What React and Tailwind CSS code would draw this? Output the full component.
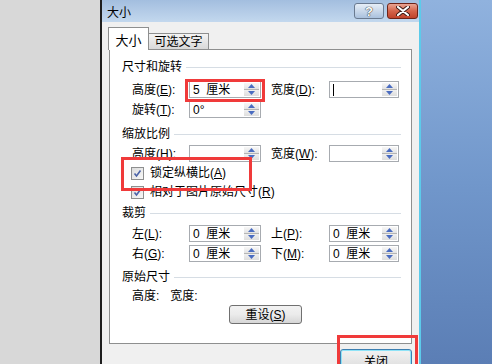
import React from 'react'

const font = "font-['Liberation_Sans','Noto_Sans_CJK_SC',sans-serif]"

function Arrow({ up }) {
  return (
    <svg width="7" height="4" viewBox="0 0 7 4">
      <polygon points={up ? '0,4 7,4 3.5,0' : '0,0 7,0 3.5,4'} fill="#4a6cc0" />
    </svg>
  )
}

function Spin({ value, w, caret }) {
  return (
    <div className={`flex h-[17px] border border-[#a7abb0] bg-white ${w}`}>
      <div className="flex flex-1 items-center whitespace-pre pl-[3px] text-[12px] leading-none">
        {value}
        {caret && <span className="h-[12px] w-px bg-black" />}
      </div>
      <div className="my-px mr-px flex w-[15px] flex-col">
        <div className="flex flex-1 items-center justify-center border-b border-[#b5b5b5] bg-gradient-to-b from-[#f7f7f7] to-[#e3e3e3]">
          <Arrow up />
        </div>
        <div className="flex flex-1 items-center justify-center bg-gradient-to-b from-[#f0f0f0] to-[#dedede]">
          <Arrow />
        </div>
      </div>
    </div>
  )
}

function Key({ k }) {
  return (
    <>
      (<span className="underline">{k}</span>)
    </>
  )
}

function Section({ title, className }) {
  return (
    <div className={`flex h-[16px] items-center pl-[12px] pr-[10px] ${className}`}>
      <span>{title}</span>
      <div className="ml-[4px] h-px flex-1 bg-[#d6dde4]" />
    </div>
  )
}

function Row({ l1, v1, l2, v2, caret2, className }) {
  return (
    <div className={`flex h-[17px] items-center pl-[22px] ${className}`}>
      <span className="w-[57px]">{l1}</span>
      <Spin value={v1} w="w-[72px]" />
      <span className="ml-[10px] w-[58px]">{l2}</span>
      {l2 && <Spin value={v2} w="w-[70px]" caret={caret2} />}
    </div>
  )
}

function Check({ label, className }) {
  return (
    <div className={`flex h-[16px] items-center pl-[21px] ${className}`}>
      <div className="flex h-[13px] w-[13px] items-center justify-center border border-[#8e8f8f] bg-gradient-to-br from-[#dcdcdc] to-[#f8f8f8]">
        <svg width="9" height="9" viewBox="0 0 9 9">
          <path d="M1.5 4.5 L3.5 7 L7.5 1.5" stroke="#4b63a8" strokeWidth="1.6" fill="none" />
        </svg>
      </div>
      <span className="ml-[6px]">{label}</span>
    </div>
  )
}

export default function App() {
  return (
    <div className={`relative flex h-[364px] w-[492px] overflow-hidden text-[12px] text-black ${font}`}>
      <div className="w-[100px] bg-[#d8d8d8]" />

      <div className="flex w-[321px] flex-col border-l-2 border-r-2 border-l-[#1e1e1e] border-r-[#5ccbea] shadow-[inset_-1px_0_0_#2c4766]">
        <div className="flex h-[22px] items-start bg-gradient-to-b from-[#a3bedf] to-[#c3d8ee]">
          <span className="mt-[4px] pl-[5px] text-[12px]">大小</span>
          <div className="ml-auto mr-[1px] mt-[3px] flex gap-[3px]">
            <div className="flex h-[16px] w-[30px] items-center justify-center rounded-[3px] border border-[#6a7a90] bg-gradient-to-b from-[#e6eef7] via-[#c9d8ea] to-[#aac1dd]">
              <span className="text-[13px] font-bold leading-none text-white [text-shadow:0_0_1px_#222,0_0_1px_#222]">?</span>
            </div>
            <div className="flex h-[16px] w-[31px] items-center justify-center rounded-[3px] border border-[#6e2418] bg-gradient-to-b from-[#e9a594] via-[#d4634a] to-[#c0432b]">
              <svg width="14" height="10" viewBox="0 0 14 10">
                <path d="M2 1 L12 9 M12 1 L2 9" stroke="#3a1a14" strokeWidth="4" strokeLinecap="round" />
                <path d="M2 1 L12 9 M12 1 L2 9" stroke="#fff" strokeWidth="2.2" strokeLinecap="round" />
              </svg>
            </div>
          </div>
        </div>

        <div className="flex flex-1 flex-col bg-[#f0f0f0] pl-[7px] pt-[5px]">
          <div className="flex items-end">
            <div className="relative z-10 -mb-px -ml-px flex h-[23px] w-[41px] justify-center border border-b-0 border-[#8e8f8f] bg-white pt-[3px] text-[13px]">
              大小
            </div>
            <div className="flex h-[16px] w-[60px] items-center justify-center border border-b-0 border-l-0 border-[#8e8f8f] bg-gradient-to-b from-[#f4f4f4] to-[#d9d9d9]">
              可选文字
            </div>
          </div>

          <div className="flex h-[295px] w-[303px] flex-col border border-[#8e8f8f] bg-white pt-[9px]">
            <Section title="尺寸和旋转" />
            <Row className="mt-[6px]" l1={<>高度<Key k="E" />:</>} v1="5  厘米" l2={<>宽度<Key k="D" />:</>} v2="" caret2 />
            <Row className="mt-[3px]" l1={<>旋转<Key k="T" />:</>} v1="0°" />
            <Section title="缩放比例" className="mt-[8px]" />
            <Row className="mt-[3px]" l1={<>高度<Key k="H" />:</>} v1="" l2={<>宽度<Key k="W" />:</>} v2="" />
            <Check className="mt-[3px]" label={<>锁定纵横比<Key k="A" /></>} />
            <Check className="mt-[3px]" label={<>相对于图片原始尺寸<Key k="R" /></>} />
            <Section title="裁剪" className="mt-[5px]" />
            <Row className="mt-[4px]" l1={<>左<Key k="L" />:</>} v1="0  厘米" l2={<>上<Key k="P" />:</>} v2="0  厘米" />
            <Row className="mt-[3px]" l1={<>右<Key k="G" />:</>} v1="0  厘米" l2={<>下<Key k="M" />:</>} v2="0  厘米" />
            <Section title="原始尺寸" className="mt-[7px]" />
            <div className="mt-[4px] flex h-[14px] items-center gap-[11px] pl-[22px]">
              <span>高度:</span>
              <span>宽度:</span>
            </div>
            <div className="ml-[119px] mt-[2px] flex h-[19px] w-[73px] items-center justify-center rounded-[3px] border border-[#707070] bg-gradient-to-b from-[#f2f2f2] via-[#ebebeb] to-[#d6d6d6]">
              重设<Key k="S" />
            </div>
          </div>

          <div className="ml-[231px] mt-[5px] flex h-[22px] w-[72px] justify-center rounded-[3px] border border-[#3c7fb1] bg-gradient-to-b from-[#f2f2f2] to-[#dcdcdc] pt-[3px] shadow-[inset_0_0_0_1px_#8fe3f7]">
            关闭
          </div>
        </div>
      </div>

      <div className="flex-1 bg-gradient-to-b from-[#90b2de] via-[#7197cb] to-[#5b7eb5]" />

      <div className="absolute left-[185px] top-[79px] h-[23px] w-[80px] border-[3px] border-[#f03a3a]" />
      <div className="absolute left-[121px] top-[157px] h-[34px] w-[131px] border-[3px] border-[#f03a3a]" />
      <div className="absolute left-[337px] top-[335px] h-[40px] w-[81px] border-[3px] border-[#f03a3a]" />
    </div>
  )
}
